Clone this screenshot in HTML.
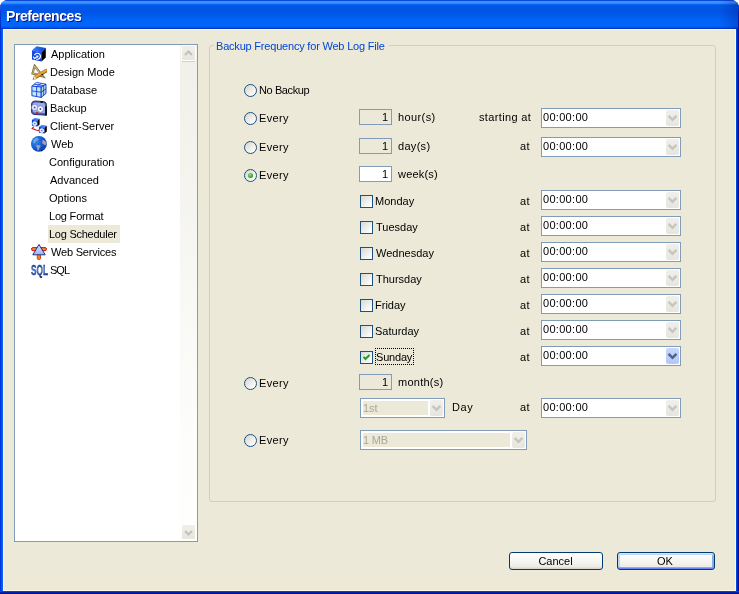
<!DOCTYPE html>
<html><head><meta charset="utf-8">
<style>
*{margin:0;padding:0;box-sizing:border-box}
html,body{width:739px;height:594px;overflow:hidden;background:#fff}
body{position:relative;font-family:"Liberation Sans",sans-serif;font-size:11px;color:#000}
.a{position:absolute}
.t{position:absolute;line-height:13px;white-space:nowrap;letter-spacing:0}
#win{position:absolute;left:0;top:0;width:739px;height:594px;border-radius:8px 8px 0 0;overflow:hidden;background:#0831d9}
#title{position:absolute;left:0;top:0;width:739px;height:29px;
background:linear-gradient(180deg,#0a48de 0px,#0a48de 1px,#3c94ff 1px,#3c94ff 3px,#1676fb 4px,#0058e8 5px,#0055e5 12px,#005cee 16px,#0064fa 21px,#0066ff 26px,#0056ea 27px,#0056ea 28px,#0038c8 28px,#0038c8 29px)}
#ttext{position:absolute;left:6px;top:8px;font-weight:bold;font-size:14px;color:#fff;text-shadow:1px 1px 0 #0a1883;letter-spacing:-0.45px;line-height:16px}
#lf{position:absolute;left:0;top:29px;width:3px;height:565px;background:linear-gradient(90deg,#0019cf,#0055e8 1px,#0055e8 2px,#0a5ff5 2px,#0a5ff5 3px)}
#rf{position:absolute;left:736px;top:29px;width:3px;height:565px;background:linear-gradient(90deg,#0044e4 0,#0044e4 1px,#0022b4 1px,#0022b4 2px,#00108c 2px)}
#bf{position:absolute;left:0;top:591px;width:739px;height:3px;background:linear-gradient(180deg,#0044e8 0,#0044e8 1px,#0022b4 1px,#0022b4 2px,#000e80 2px)}
#client{position:absolute;left:3px;top:29px;width:733px;height:562px;background:#ece9d8;border:1px solid #fdf8e3;border-right-color:#fdf8e3}
/* listbox */
#lb{position:absolute;left:14px;top:44px;width:184px;height:498px;background:#fff;border:1px solid #7f9db9}
#sb{position:absolute;left:180px;top:45px;width:17px;height:496px;background:linear-gradient(180deg,#f2f0ea 4%,#f4f3ee 25%,#f8f8f5 50%,#fdfdfb 80%,#fefefc 100%)}
.sbtn{position:absolute;left:181px;width:15px;height:16px;border:1px solid #fff;border-radius:2px;background:linear-gradient(180deg,#f0efe9,#e8e6de)}
.sbsh{position:absolute;left:182px;width:13px;height:1px;background:#d2d0c2}
.sel{position:absolute;left:48px;top:225px;width:72px;height:18px;background:#ece9d8}
/* group */
#grp{position:absolute;left:209px;top:45px;width:507px;height:457px;border:1px solid #d0d0bf;border-radius:3px}
#glabel{position:absolute;left:214px;top:40px;padding:0 4px 0 2px;background:#ece9d8;color:#0046d5;line-height:13px;letter-spacing:-0.2px}
.radio{position:absolute;width:13px;height:13px;border-radius:50%;border:1px solid #1c5180;background:linear-gradient(135deg,#dcdcd6 15%,#f4f4f0 65%,#fff 90%)}
.dot{position:absolute;left:3px;top:3px;width:5px;height:5px;border-radius:50%;background:radial-gradient(circle at 40% 35%,#8be08b,#21a121 70%)}
.cb{position:absolute;left:360px;width:13px;height:13px;border:1px solid #1c5180;background:linear-gradient(135deg,#dcdcd7 10%,#fff 90%)}
.tb{position:absolute;left:359px;width:33px;height:16px;border:1px solid #7f9db9;background:#ece9d8}
.tbv{position:absolute;right:3px;top:1px;line-height:13px}
.cmb{position:absolute;left:541px;width:140px;height:20px;border:1px solid #7f9db9;background:#fff}
.cmbt{position:absolute;left:1px;top:2px;line-height:13px;letter-spacing:0.3px}
.cbtn{position:absolute;right:1px;top:1px;width:13px;height:16px;border-radius:2px;background:linear-gradient(180deg,#f0efea,#e6e5df)}
.chev{position:absolute;left:0;top:0}
.btn{position:absolute;top:552px;height:18px;border:1px solid #003c74;border-radius:3px;background:linear-gradient(180deg,#fff 0%,#f4f3ee 60%,#ecebe6 85%,#d6d0c5 100%);text-align:center;line-height:17px}
body{will-change:transform}
</style></head><body>
<div id="win">
 <div id="title"><div id="ttext">Preferences</div><div class="a" style="left:719px;top:0;width:20px;height:29px;background:linear-gradient(90deg,rgba(0,30,140,0),rgba(0,30,140,0.35))"></div></div>
 <div id="lf"></div><div class="a" style="left:0;top:5px;width:1px;height:24px;background:linear-gradient(180deg,#2a6af0,#0a3ad8 30%,#0028c8)"></div><div class="a" style="left:738px;top:5px;width:1px;height:24px;background:linear-gradient(180deg,#1a50d0,#0020a8 30%,#001890)"></div><div id="rf"></div><div id="bf"></div>
 <div id="client"></div>
</div>

<!-- listbox -->
<div id="lb"></div>
<div id="sb"></div>
<div class="sbtn" style="top:45px"><svg class="a" style="left:0;top:0" width="13" height="15" viewBox="0 0 13 15"><polyline points="3,9 6.5,5.5 10,9" fill="none" stroke="#c3c3ba" stroke-width="2.2"/></svg></div>
<div class="sbsh" style="top:61px"></div><div class="sbtn" style="top:524px"><svg class="a" style="left:0;top:0" width="13" height="15" viewBox="0 0 13 15"><polyline points="3,6 6.5,9.5 10,6" fill="none" stroke="#c3c3ba" stroke-width="2.2"/></svg></div>
<div class="sel"></div>
<div class="t" style="left:51px;top:48px">Application</div>
<div class="t" style="left:50px;top:66px">Design Mode</div>
<div class="t" style="left:50px;top:84px">Database</div>
<div class="t" style="left:50px;top:102px">Backup</div>
<div class="t" style="left:50px;top:120px">Client-Server</div>
<div class="t" style="left:51px;top:138px">Web</div>
<div class="t" style="left:49px;top:156px">Configuration</div>
<div class="t" style="left:50px;top:174px">Advanced</div>
<div class="t" style="left:49px;top:192px">Options</div>
<div class="t" style="left:49px;top:210px;letter-spacing:-0.2px">Log Format</div>
<div class="t" style="left:49px;top:228px;letter-spacing:-0.25px">Log Scheduler</div>
<div class="t" style="left:51px;top:246px;letter-spacing:-0.2px">Web Services</div>
<div class="t" style="left:50px;top:264px;letter-spacing:-1px">SQL</div>


<!-- icons -->
<svg class="a" style="left:31px;top:46px" width="16" height="16" viewBox="0 0 16 16">
 <defs><linearGradient id="gf" x1="0" y1="0" x2="0" y2="1"><stop offset="0" stop-color="#1650e8"/><stop offset="1" stop-color="#0a3ad0"/></linearGradient>
 <linearGradient id="gt" x1="0" y1="0" x2="1" y2="0"><stop offset="0" stop-color="#3a7cf8"/><stop offset="1" stop-color="#0e46d8"/></linearGradient></defs>
 <polygon points="1,4.2 5.7,0.2 14.8,2 10.5,6.4" fill="url(#gt)"/>
 <polygon points="1,4.2 10.5,6.4 10.5,15.5 1,13.5" fill="url(#gf)"/>
 <polygon points="10.5,6.4 14.8,2 14.8,11.5 10.5,15.5" fill="#000"/>
 <path d="M3.6 9.2 A3 3 0 1 1 5.2 13" stroke="#fff" stroke-width="1.2" fill="none"/>
 <path d="M2.2 10.6 L3.6 12.6 L5.4 11" stroke="#fff" stroke-width="1.1" fill="none"/>
 <circle cx="6.3" cy="10.6" r="1.3" fill="#d8e4ff"/>
</svg>
<svg class="a" style="left:31px;top:64px" width="16" height="16" viewBox="0 0 16 16">
 <polygon points="3.4,0.6 0.8,9.8 13.6,13.4" fill="#e0d8b8" stroke="#8e7a44" stroke-width="1.1"/>
 <polygon points="3.8,3.6 2.4,8.9 9.5,10.6" fill="#fff" stroke="#a08c58" stroke-width="1"/>
 <line x1="4.2" y1="13.6" x2="15.2" y2="6.6" stroke="#9a5e10" stroke-width="3.6" stroke-linecap="round"/>
 <line x1="4.2" y1="13.2" x2="15" y2="6.3" stroke="#eaa638" stroke-width="2.2" stroke-linecap="round"/>
 <polygon points="1.8,15.6 3.0,12.2 5.6,14.6" fill="#eeeec8"/>
 <polygon points="1.6,15.8 2.3,14 3.4,15" fill="#303030"/>
 <rect x="10.6" y="9.8" width="1.5" height="1.3" fill="#111"/>
</svg>
<svg class="a" style="left:31px;top:82px" width="16" height="16" viewBox="0 0 16 16">
 <polygon points="0.9,4.1 5.4,0.4 15,2.2 10.2,5" fill="#d8f0f8" stroke="#1848d8" stroke-width="0.9"/>
 <polygon points="0.9,4.1 10.2,5 10.2,15.4 0.9,13.7" fill="#c4e6f0" stroke="#1848d8" stroke-width="1"/>
 <polygon points="10.2,5 15,2.2 15,11.4 10.2,15.4" fill="#b0d8e8" stroke="#0c30b0" stroke-width="0.9"/>
 <line x1="5.6" y1="4.6" x2="5.6" y2="14.6" stroke="#1848d8" stroke-width="0.9"/>
 <line x1="0.9" y1="8.9" x2="10.2" y2="10.2" stroke="#1848d8" stroke-width="0.9"/>
 <line x1="12.6" y1="3.6" x2="12.6" y2="13.4" stroke="#1848d8" stroke-width="0.8"/>
 <line x1="10.2" y1="10.2" x2="15" y2="6.8" stroke="#1848d8" stroke-width="1"/>
 <line x1="3.1" y1="2.2" x2="12.6" y2="3.6" stroke="#1848d8" stroke-width="0.9"/>
 <line x1="10.2" y1="1.3" x2="5.6" y2="4.6" stroke="#1848d8" stroke-width="0.9"/>
</svg>
<svg class="a" style="left:31px;top:100px" width="16" height="16" viewBox="0 0 16 16">
 <path d="M0.6 3.6 Q1 1.2 4 1 L12.5 1.6 Q15.4 2 15.4 4.6 L15.4 15.2 L3 14.4 Q0.6 14 0.6 12 Z" fill="#5a64a8" stroke="#2a2e70" stroke-width="1"/>
 <path d="M1.8 4.2 Q2 2.6 4 2.5 L12 3 Q14 3.2 14 5 L14 13 L3.5 12.6 Q1.8 12.4 1.8 11 Z" fill="#98acea"/>
 <circle cx="3.6" cy="7.4" r="3" fill="#f4f6ff" stroke="#6478c0" stroke-width="0.6"/>
 <circle cx="9.4" cy="9.1" r="3.1" fill="#fff" stroke="#6478c0" stroke-width="0.6"/>
 <circle cx="3.6" cy="7.4" r="1" fill="#4050a0"/>
 <circle cx="9.4" cy="9.1" r="1" fill="#4050a0"/>
 <polygon points="5.2,11.8 7.3,12.2 7,13.8 5.4,13.4" fill="#e01010"/>
 <rect x="14.2" y="6.4" width="1.6" height="9" fill="#000"/>
 <rect x="9.5" y="1.4" width="2.4" height="1.4" fill="#000"/>
</svg>
<svg class="a" style="left:31px;top:118px" width="16" height="16" viewBox="0 0 16 16">
 <polyline points="2.8,8.6 1.2,10.4 5,12 8.2,12.6" stroke="#c81818" stroke-width="1.2" fill="none"/>
 <polygon points="0.9,1.8 3.8,0 8.6,0.8 6.4,2.8" fill="#3a7cf8"/>
 <polygon points="0.9,1.8 6.4,2.8 6.4,8.6 0.9,7.8" fill="#0c46dc"/>
 <polygon points="6.4,2.8 8.6,0.8 8.6,6.6 6.4,8.6" fill="#000"/>
 <circle cx="3.7" cy="5.6" r="1.9" fill="#c8d8ff" stroke="#fff" stroke-width="0.9"/>
 <circle cx="3.7" cy="5.6" r="0.7" fill="#3060e0"/>
 <polygon points="7.9,8.8 10.8,7 15.8,7.8 13.6,9.8" fill="#3a7cf8"/>
 <polygon points="7.9,8.8 13.6,9.8 13.6,15.6 7.9,14.8" fill="#0c46dc"/>
 <polygon points="13.6,9.8 15.8,7.8 15.8,13.6 13.6,15.6" fill="#000"/>
 <circle cx="10.8" cy="12.6" r="1.9" fill="#c8d8ff" stroke="#fff" stroke-width="0.9"/>
 <circle cx="10.8" cy="12.6" r="0.7" fill="#3060e0"/>
</svg>
<svg class="a" style="left:31px;top:136px" width="16" height="16" viewBox="0 0 16 16">
 <defs><radialGradient id="gg" cx="0.3" cy="0.35" r="0.9"><stop offset="0" stop-color="#3a8ae8"/><stop offset="0.5" stop-color="#1458d0"/><stop offset="1" stop-color="#062a98"/></radialGradient></defs>
 <circle cx="7.9" cy="7.9" r="7.9" fill="url(#gg)"/>
 <path d="M2 5.5 Q2.5 2.5 5.5 1.8 Q8 1.6 7.5 3.5 Q6.5 5 5 5 Q4 6.5 3 7.5 Q2 7 2 5.5Z" fill="#7ab8e8" opacity="0.75"/>
 <path d="M5 9.2 Q7 8.4 9.5 9.6 Q9.8 11 8.5 12 Q7.8 13.5 7 15 Q6 13.5 6 11.5 Q5 10.5 5 9.2Z" fill="#a8b0b8" opacity="0.85"/>
 <path d="M11.8 3.8 Q14.6 4.6 15.4 7 Q15.2 9 13.8 9.2 Q12.6 8.4 11.4 7.6 Q11 5.5 11.8 3.8Z" fill="#d4a8a8" opacity="0.85"/>
 <circle cx="10.6" cy="14.6" r="0.7" fill="#000"/>
</svg>
<svg class="a" style="left:31px;top:244px" width="16" height="16" viewBox="0 0 16 16">
 <rect x="0.5" y="3.6" width="15" height="3" rx="1.5" fill="#f08a20" stroke="#d01818" stroke-width="1"/>
 <rect x="6.3" y="10.5" width="3.2" height="5" rx="1.2" fill="#f08a20" stroke="#d01818" stroke-width="0.8"/>
 <defs><linearGradient id="gw" x1="0" y1="0" x2="0" y2="1"><stop offset="0" stop-color="#d8e4ff"/><stop offset="1" stop-color="#9ab2f2"/></linearGradient></defs>
 <polygon points="8,0.5 14.2,10.8 1.8,10.8" fill="url(#gw)" stroke="#26307a" stroke-width="1"/>
</svg>
<svg class="a" style="left:30px;top:261px" width="18" height="17" viewBox="0 0 18 17">
 <defs><linearGradient id="gs" x1="0" y1="0" x2="0" y2="1"><stop offset="0" stop-color="#0a2070"/><stop offset="0.5" stop-color="#5a8ae0"/><stop offset="1" stop-color="#0a2070"/></linearGradient></defs>
 <text x="0" y="0" font-family="Liberation Sans" font-weight="bold" font-size="12" fill="url(#gs)" stroke="#0a2070" stroke-width="0.3" textLength="17" lengthAdjust="spacingAndGlyphs" transform="translate(1,14) scale(1,1.22)">SQL</text>
</svg>

<!-- group -->
<div id="grp"></div>
<div id="glabel">Backup Frequency for Web Log File</div>

<div class="radio" style="left:244px;top:84px"></div><div class="t" style="left:259px;top:84px;letter-spacing:-0.4px">No Backup</div>
<div class="radio" style="left:244px;top:112px"></div><div class="t" style="left:259px;top:112px;letter-spacing:0.35px">Every</div>
<div class="radio" style="left:244px;top:141px"></div><div class="t" style="left:259px;top:141px;letter-spacing:0.35px">Every</div>
<div class="radio" style="left:244px;top:169px"><div class="dot"></div></div><div class="t" style="left:259px;top:169px;letter-spacing:0.35px">Every</div>
<div class="radio" style="left:244px;top:377px"></div><div class="t" style="left:259px;top:377px;letter-spacing:0.35px">Every</div>
<div class="radio" style="left:244px;top:434px"></div><div class="t" style="left:259px;top:434px;letter-spacing:0.35px">Every</div>

<div class="tb" style="top:109px"><div class="tbv">1</div></div><div class="t" style="left:398px;top:111px;letter-spacing:0.4px">hour(s)</div>
<div class="tb" style="top:138px"><div class="tbv">1</div></div><div class="t" style="left:398px;top:140px;letter-spacing:0.3px">day(s)</div>
<div class="tb" style="top:166px;background:#fff"><div class="tbv">1</div></div><div class="t" style="left:398px;top:168px;letter-spacing:0.2px">week(s)</div>
<div class="tb" style="top:374px"><div class="tbv">1</div></div><div class="t" style="left:398px;top:376px;letter-spacing:0.25px">month(s)</div>

<div class="t" style="left:479px;top:111px;letter-spacing:0.35px">starting at</div>
<div class="cmb" style="top:108px"><div class="cmbt">00:00:00</div><div class="cbtn"><svg class="chev" width="13" height="16" viewBox="0 0 13 16"><polyline points="2.6,5.8 6.5,9.8 10.4,5.8" fill="none" stroke="#c6c6bd" stroke-width="2.4"/></svg></div></div>
<div class="t" style="left:520px;top:140px;letter-spacing:0.5px">at</div>
<div class="cmb" style="top:137px"><div class="cmbt">00:00:00</div><div class="cbtn"><svg class="chev" width="13" height="16" viewBox="0 0 13 16"><polyline points="2.6,5.8 6.5,9.8 10.4,5.8" fill="none" stroke="#c6c6bd" stroke-width="2.4"/></svg></div></div>

<div class="cb" style="top:195px"></div><div class="t" style="left:375px;top:195px">Monday</div><div class="t" style="left:520px;top:195px;letter-spacing:0.5px">at</div>
<div class="cmb" style="top:190px"><div class="cmbt">00:00:00</div><div class="cbtn"><svg class="chev" width="13" height="16" viewBox="0 0 13 16"><polyline points="2.6,5.8 6.5,9.8 10.4,5.8" fill="none" stroke="#c6c6bd" stroke-width="2.4"/></svg></div></div>
<div class="cb" style="top:221px"></div><div class="t" style="left:376px;top:221px">Tuesday</div><div class="t" style="left:520px;top:221px;letter-spacing:0.5px">at</div>
<div class="cmb" style="top:216px"><div class="cmbt">00:00:00</div><div class="cbtn"><svg class="chev" width="13" height="16" viewBox="0 0 13 16"><polyline points="2.6,5.8 6.5,9.8 10.4,5.8" fill="none" stroke="#c6c6bd" stroke-width="2.4"/></svg></div></div>
<div class="cb" style="top:247px"></div><div class="t" style="left:376px;top:247px">Wednesday</div><div class="t" style="left:520px;top:247px;letter-spacing:0.5px">at</div>
<div class="cmb" style="top:242px"><div class="cmbt">00:00:00</div><div class="cbtn"><svg class="chev" width="13" height="16" viewBox="0 0 13 16"><polyline points="2.6,5.8 6.5,9.8 10.4,5.8" fill="none" stroke="#c6c6bd" stroke-width="2.4"/></svg></div></div>
<div class="cb" style="top:273px"></div><div class="t" style="left:376px;top:273px">Thursday</div><div class="t" style="left:520px;top:273px;letter-spacing:0.5px">at</div>
<div class="cmb" style="top:268px"><div class="cmbt">00:00:00</div><div class="cbtn"><svg class="chev" width="13" height="16" viewBox="0 0 13 16"><polyline points="2.6,5.8 6.5,9.8 10.4,5.8" fill="none" stroke="#c6c6bd" stroke-width="2.4"/></svg></div></div>
<div class="cb" style="top:299px"></div><div class="t" style="left:375px;top:299px">Friday</div><div class="t" style="left:520px;top:299px;letter-spacing:0.5px">at</div>
<div class="cmb" style="top:294px"><div class="cmbt">00:00:00</div><div class="cbtn"><svg class="chev" width="13" height="16" viewBox="0 0 13 16"><polyline points="2.6,5.8 6.5,9.8 10.4,5.8" fill="none" stroke="#c6c6bd" stroke-width="2.4"/></svg></div></div>
<div class="cb" style="top:325px"></div><div class="t" style="left:375px;top:325px">Saturday</div><div class="t" style="left:520px;top:325px;letter-spacing:0.5px">at</div>
<div class="cmb" style="top:320px"><div class="cmbt">00:00:00</div><div class="cbtn"><svg class="chev" width="13" height="16" viewBox="0 0 13 16"><polyline points="2.6,5.8 6.5,9.8 10.4,5.8" fill="none" stroke="#c6c6bd" stroke-width="2.4"/></svg></div></div>
<div class="cb" style="top:351px"><svg class="a" style="left:0;top:0" width="11" height="11" viewBox="0 0 11 11"><polyline points="2.5,4.8 4.5,7 8.5,3" fill="none" stroke="#21a121" stroke-width="2"/></svg></div><div class="a" style="left:375px;top:348px;width:39px;height:17px;border:1px dotted #000"></div><div class="t" style="left:376px;top:351px;letter-spacing:-0.2px">Sunday</div><div class="t" style="left:520px;top:351px;letter-spacing:0.5px">at</div>
<div class="cmb" style="top:346px"><div class="cmbt">00:00:00</div><div class="cbtn" style="background:linear-gradient(180deg,#c8d6fb,#b2c8f8)"><svg class="chev" width="13" height="16" viewBox="0 0 13 16"><polyline points="2.6,5.8 6.5,9.8 10.4,5.8" fill="none" stroke="#4d6185" stroke-width="2.4"/></svg></div></div>

<div class="cmb" style="left:360px;top:398px;width:85px"><div class="a" style="left:2px;top:2px;width:65px;height:14px;background:#ece9d8"></div><div class="cmbt" style="color:#aca899;top:3px;left:2px;letter-spacing:0">1st</div><div class="cbtn"><svg class="chev" width="13" height="16" viewBox="0 0 13 16"><polyline points="2.6,5.8 6.5,9.8 10.4,5.8" fill="none" stroke="#c6c6bd" stroke-width="2.4"/></svg></div></div>
<div class="t" style="left:452px;top:401px;letter-spacing:0.6px">Day</div>
<div class="t" style="left:520px;top:401px;letter-spacing:0.5px">at</div>
<div class="cmb" style="top:398px"><div class="cmbt">00:00:00</div><div class="cbtn"><svg class="chev" width="13" height="16" viewBox="0 0 13 16"><polyline points="2.6,5.8 6.5,9.8 10.4,5.8" fill="none" stroke="#c6c6bd" stroke-width="2.4"/></svg></div></div>
<div class="cmb" style="left:360px;top:430px;width:167px"><div class="a" style="left:2px;top:2px;width:147px;height:14px;background:#ece9d8"></div><div class="cmbt" style="color:#aca899;top:3px;left:2px;letter-spacing:-0.2px">1 MB</div><div class="cbtn"><svg class="chev" width="13" height="16" viewBox="0 0 13 16"><polyline points="2.6,5.8 6.5,9.8 10.4,5.8" fill="none" stroke="#c6c6bd" stroke-width="2.4"/></svg></div></div>

<div class="btn" style="left:509px;width:94px"><span style="position:relative;left:-0.5px">Cancel</span></div>
<div class="btn" style="left:617px;width:98px;box-shadow:inset 0 1px 0 #cee7ff,inset 0 -1px 0 #6982ee,inset 1px 0 0 #bcd4f6,inset -1px 0 0 #89ade4,inset 0 2px 0 #bcd4f6,inset 0 -2px 0 #89ade4,inset 2px 0 0 #bcd4f6,inset -2px 0 0 #89ade4"><span style="position:relative;left:-1px">OK</span></div>
</body></html>
